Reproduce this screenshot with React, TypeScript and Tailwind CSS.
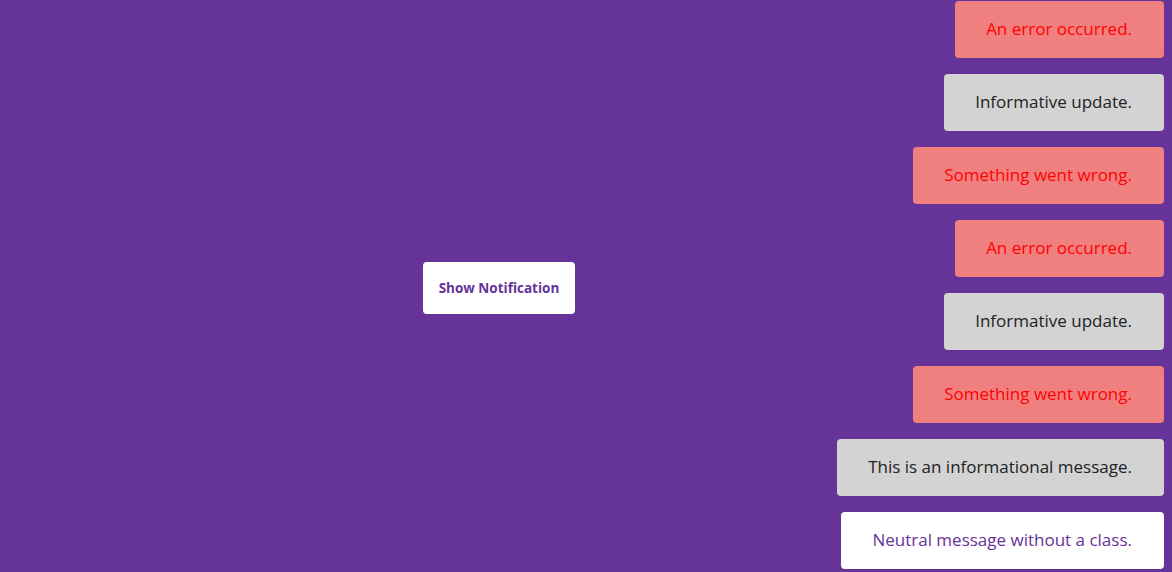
const toasts = [
  { text: "An error occurred.", kind: "error" },
  { text: "Informative update.", kind: "info" },
  { text: "Something went wrong.", kind: "error" },
  { text: "An error occurred.", kind: "error" },
  { text: "Informative update.", kind: "info" },
  { text: "Something went wrong.", kind: "error" },
  { text: "This is an informational message.", kind: "info" },
  { text: "Neutral message without a class.", kind: "neutral" },
];

const kindClass: Record<string, string> = {
  error: "bg-[#f08080] text-[#ff0000]",
  info: "bg-[#d3d3d3] text-[#222222]",
  neutral: "bg-white text-[#663399]",
};

export default function App() {
  return (
    <div
      className="relative h-[572px] w-full overflow-hidden bg-[#663399]"
      style={{ fontFamily: '"Open Sans", "Liberation Sans", sans-serif' }}
    >
      <div className="flex h-full items-center justify-center pr-[174px]">
        <button className="mt-1 rounded bg-white px-4 py-4 text-[13.5px] leading-5 font-bold text-[#663399]">
          Show Notification
        </button>
      </div>
      <div className="absolute top-[1px] right-2 flex flex-col items-end gap-4">
        {toasts.map((t, i) => (
          <div
            key={i}
            className={
              "rounded pt-[15px] pb-[17px] pr-8 pl-[31px] text-[17px] leading-[25px] " +
              kindClass[t.kind]
            }
          >
            {t.text}
          </div>
        ))}
      </div>
    </div>
  );
}
